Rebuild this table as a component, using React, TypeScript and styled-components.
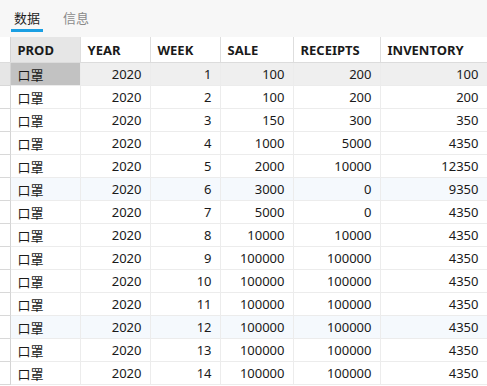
import styled, { createGlobalStyle } from 'styled-components';

const GlobalStyle = createGlobalStyle`
  html, body {
    margin: 0;
    padding: 0;
    background: #ffffff;
    overflow: hidden;
  }
  body {
    font-family: "Noto Sans", "Noto Sans CJK SC", sans-serif;
    font-size: 13px;
    color: #1a1a1a;
  }
`;

const Page = styled.div`
  width: 487px;
  height: 386px;
  overflow: hidden;
  display: flex;
  flex-direction: column;
`;

const TabBar = styled.div`
  height: 37px;
  flex: none;
  box-sizing: border-box;
  background: #f7f7f7;
  display: flex;
  align-items: flex-start;
  padding-left: 11px;
  gap: 17px;
`;

const Tab = styled.div<{ $active?: boolean }>`
  padding: 9px 3px 3px;
  line-height: 17px;
  font-family: "Noto Sans CJK SC", sans-serif;
  font-size: 13px;
  color: ${(p) => (p.$active ? '#1f1f1f' : '#8a8a8a')};
  border-bottom: 3px solid ${(p) => (p.$active ? '#1a9fe3' : 'transparent')};
`;

const Grid = styled.table`
  border-collapse: collapse;
  table-layout: fixed;
  width: 487px;
`;

const HeadCell = styled.th<{ $selected?: boolean }>`
  height: 25px;
  padding: 0 7px;
  text-align: left;
  font-weight: 700;
  font-size: 13px;
  color: #1a1a1a;
  white-space: nowrap;
  overflow: hidden;
  background: ${(p) => (p.$selected ? '#e6e6e6' : '#ffffff')};
  border-right: 1px solid #dedede;
  border-bottom: 1px solid #dcdcdc;
`;

const Gutter = styled.td<{ $selected?: boolean }>`
  padding: 0;
  background: ${(p) => (p.$selected ? '#e6e6e6' : '#ffffff')};
  border-right: 1px solid #d4d4d4;
  border-bottom: 1px solid #d8d8d8;
`;

const HeadGutter = styled.th`
  padding: 0;
  background: #ffffff;
  border-right: 1px solid #d4d4d4;
  border-bottom: 1px solid #dcdcdc;
`;

const Row = styled.tr<{ $tone: 'plain' | 'selected' | 'alt' }>`
  background: ${(p) =>
    p.$tone === 'selected' ? '#efefef' : p.$tone === 'alt' ? '#f5f9fd' : '#ffffff'};
`;

const Cell = styled.td<{ $num?: boolean; $focus?: boolean }>`
  height: 22px;
  padding: 0 ${(p) => (p.$num ? '8px' : '7px')};
  text-align: ${(p) => (p.$num ? 'right' : 'left')};
  white-space: nowrap;
  overflow: hidden;
  font-family: "Noto Sans", "Noto Sans CJK SC", sans-serif;
  background: ${(p) => (p.$focus ? '#c2c2c2' : 'transparent')};
  border-right: 1px solid #ececec;
  border-bottom: 1px solid #ececec;
`;

const columns = ['PROD', 'YEAR', 'WEEK', 'SALE', 'RECEIPTS', 'INVENTORY'];
const widths = [10, 70, 70, 70, 73, 87, 107];

const data: [number, number, number, number][] = [
  [1, 100, 200, 100],
  [2, 100, 200, 200],
  [3, 150, 300, 350],
  [4, 1000, 5000, 4350],
  [5, 2000, 10000, 12350],
  [6, 3000, 0, 9350],
  [7, 5000, 0, 4350],
  [8, 10000, 10000, 4350],
  [9, 100000, 100000, 4350],
  [10, 100000, 100000, 4350],
  [11, 100000, 100000, 4350],
  [12, 100000, 100000, 4350],
  [13, 100000, 100000, 4350],
  [14, 100000, 100000, 4350],
];

export default function App() {
  return (
    <Page>
      <GlobalStyle />
      <TabBar>
        <Tab $active>数据</Tab>
        <Tab>信息</Tab>
      </TabBar>
      <Grid>
        <colgroup>
          {widths.map((w, i) => (
            <col key={i} style={{ width: w }} />
          ))}
        </colgroup>
        <thead>
          <tr>
            <HeadGutter />
            {columns.map((c, i) => (
              <HeadCell key={c} $selected={i === 0}>
                {c}
              </HeadCell>
            ))}
          </tr>
        </thead>
        <tbody>
          {data.map(([week, sale, receipts, inventory], i) => {
            const tone = i === 0 ? 'selected' : week === 6 || week === 12 ? 'alt' : 'plain';
            return (
              <Row key={week} $tone={tone}>
                <Gutter $selected={i === 0} />
                <Cell $focus={i === 0}>口罩</Cell>
                <Cell $num>2020</Cell>
                <Cell $num>{week}</Cell>
                <Cell $num>{sale}</Cell>
                <Cell $num>{receipts}</Cell>
                <Cell $num>{inventory}</Cell>
              </Row>
            );
          })}
        </tbody>
      </Grid>
    </Page>
  );
}
